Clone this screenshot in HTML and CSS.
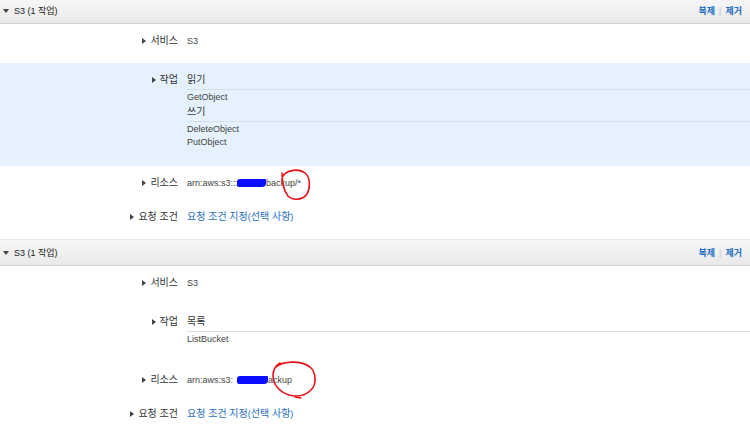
FILE: index.html
```html
<!DOCTYPE html>
<html lang="ko">
<head>
<meta charset="utf-8">
<title>S3 정책</title>
<link rel="stylesheet" href="styles.css">
</head>
<body>
<div class="page">
  <section class="svc">
    <div class="svc-head">
      <div class="svc-title"><span class="caret"></span>S3 (1 작업)</div>
      <div class="svc-actions"><a class="act">복제</a><span class="sep">|</span><a class="act">제거</a></div>
    </div>
    <div class="svc-body">
      <div class="row row-service">
        <div class="label"><span class="tri"></span><span class="ko">서비스</span></div>
        <div class="value">S3</div>
      </div>
      <div class="row row-actions hovered">
        <div class="label label-top"><span class="tri"></span><span class="ko">작업</span></div>
        <div class="value">
          <div class="group">
            <div class="group-head"><span class="ko">읽기</span></div>
            <ul class="items"><li>GetObject</li></ul>
          </div>
          <div class="group">
            <div class="group-head"><span class="ko">쓰기</span></div>
            <ul class="items"><li>DeleteObject</li><li>PutObject</li></ul>
          </div>
        </div>
      </div>
      <div class="row row-resource">
        <div class="label"><span class="tri"></span><span class="ko">리소스</span></div>
        <div class="value value-anno">arn:aws:s3:::<span class="redact redact-a"></span>backup/*<svg class="circle circle-a" width="34" height="34" viewBox="0 0 34 34"><path d="M4 7 C 8 1, 20 -1, 26 4 C 32 9, 31 20, 28 25 C 24 31, 14 32, 9 27 C 5 22, 3 14, 3 4" fill="none" stroke="#e8141b" stroke-width="1.6" stroke-linecap="round"/></svg></div>
      </div>
      <div class="row row-cond">
        <div class="label"><span class="tri"></span><span class="ko">요청 조건</span></div>
        <div class="value"><a class="link"><span class="ko">요청 조건 지정</span>(<span class="ko">선택 사항</span>)</a></div>
      </div>
    </div>
  </section>

  <section class="svc">
    <div class="svc-head">
      <div class="svc-title"><span class="caret"></span>S3 (1 작업)</div>
      <div class="svc-actions"><a class="act">복제</a><span class="sep">|</span><a class="act">제거</a></div>
    </div>
    <div class="svc-body">
      <div class="row row-service">
        <div class="label"><span class="tri"></span><span class="ko">서비스</span></div>
        <div class="value">S3</div>
      </div>
      <div class="row row-actions">
        <div class="label label-top"><span class="tri"></span><span class="ko">작업</span></div>
        <div class="value">
          <div class="group">
            <div class="group-head"><span class="ko">목록</span></div>
            <ul class="items"><li>ListBucket</li></ul>
          </div>
        </div>
      </div>
      <div class="row row-resource">
        <div class="label"><span class="tri"></span><span class="ko">리소스</span></div>
        <div class="value value-anno">arn:aws:s3:<span class="redact redact-b"></span>ackup<svg class="circle circle-b" width="48" height="40" viewBox="0 0 48 40"><path d="M5 7 C 12 1, 30 0, 39 7 C 45 12, 46 24, 40 30 C 34 36, 26 37, 18 35 C 9 32, 2 25, 2 16 C 2 10, 4 6, 9 3" fill="none" stroke="#e8141b" stroke-width="1.6" stroke-linecap="round"/><path d="M24 37 L 30 38" fill="none" stroke="#e8141b" stroke-width="1.4" stroke-linecap="round"/></svg></div>
      </div>
      <div class="row row-cond">
        <div class="label"><span class="tri"></span><span class="ko">요청 조건</span></div>
        <div class="value"><a class="link"><span class="ko">요청 조건 지정</span>(<span class="ko">선택 사항</span>)</a></div>
      </div>
    </div>
  </section>
</div>
</body>
</html>
```
FILE: styles.css
```css
html, body {
  margin: 0;
  padding: 0;
  background: #ffffff;
}
body {
  font-family: "Liberation Sans", Arial, "Noto Sans CJK KR", sans-serif;
  font-size: 9px;
  color: #444444;
  overflow: hidden;
}
.page {
  margin-top: -3px;
}
.ko {
  font-size: 10px;
}
.svc-head {
  box-sizing: border-box;
  height: 27px;
  border-top: 1px solid #e6e6e6;
  border-bottom: 1px solid #cfcfcf;
  background: linear-gradient(#f7f7f7, #e9e9e9);
  display: flex;
  align-items: center;
  justify-content: space-between;
  padding: 0 8px 0 3px;
  line-height: 14px;
}
.svc-title {
  display: flex;
  align-items: center;
  color: #222222;
}
.caret {
  width: 0;
  height: 0;
  border-left: 3px solid transparent;
  border-right: 3px solid transparent;
  border-top: 4px solid #444444;
  margin-right: 5px;
}
.svc-actions {
  display: flex;
  align-items: center;
}
.act {
  color: #1f6fbf;
  font-weight: bold;
}
.sep {
  color: #c8c8c8;
  margin: 0 4px;
}
.svc-body {
  display: flex;
  flex-direction: column;
  padding: 10px 0 15px;
}
.row {
  display: grid;
  grid-template-columns: 178px 1fr;
  column-gap: 9px;
  line-height: 14px;
}
.row-service { margin-bottom: 15px; }
.row-actions {
  padding: 9px 0 17px;
  margin-bottom: 10px;
}
.row-actions.hovered { background: #e5f1fc; }
.row-resource { margin-bottom: 20px; }
.label {
  display: flex;
  align-items: center;
  justify-content: flex-end;
  height: 14px;
  color: #333333;
  white-space: nowrap;
}
.label-top { margin-top: 1px; }
.tri {
  width: 0;
  height: 0;
  border-top: 3px solid transparent;
  border-bottom: 3px solid transparent;
  border-left: 4px solid #444444;
  margin-right: 4px;
}
.value {
  color: #444444;
  white-space: nowrap;
}
.group-head {
  padding: 1px 0 2px;
  line-height: 14px;
  height: 14px;
  border-bottom: 1px solid #e0e0e0;
  color: #333333;
}
.hovered .group-head { border-bottom-color: #d3dfea; }
.items {
  list-style: none;
  margin: 0;
  padding: 1px 0 0;
  line-height: 13px;
}
.link { color: #1f6fbf; }
.value-anno { position: relative; }
.redact {
  display: inline-block;
  height: 8px;
  background: #0a10ff;
  vertical-align: -1px;
  border-radius: 3px 1px 4px 2px;
}
.redact-a { width: 29px; margin-left: -1px; }
.redact-b { width: 31px; margin-left: 4px; }
.circle {
  position: absolute;
  overflow: visible;
}
.circle-a { left: 92px; top: -7px; }
.circle-b { left: 84px; top: -13px; }
```
